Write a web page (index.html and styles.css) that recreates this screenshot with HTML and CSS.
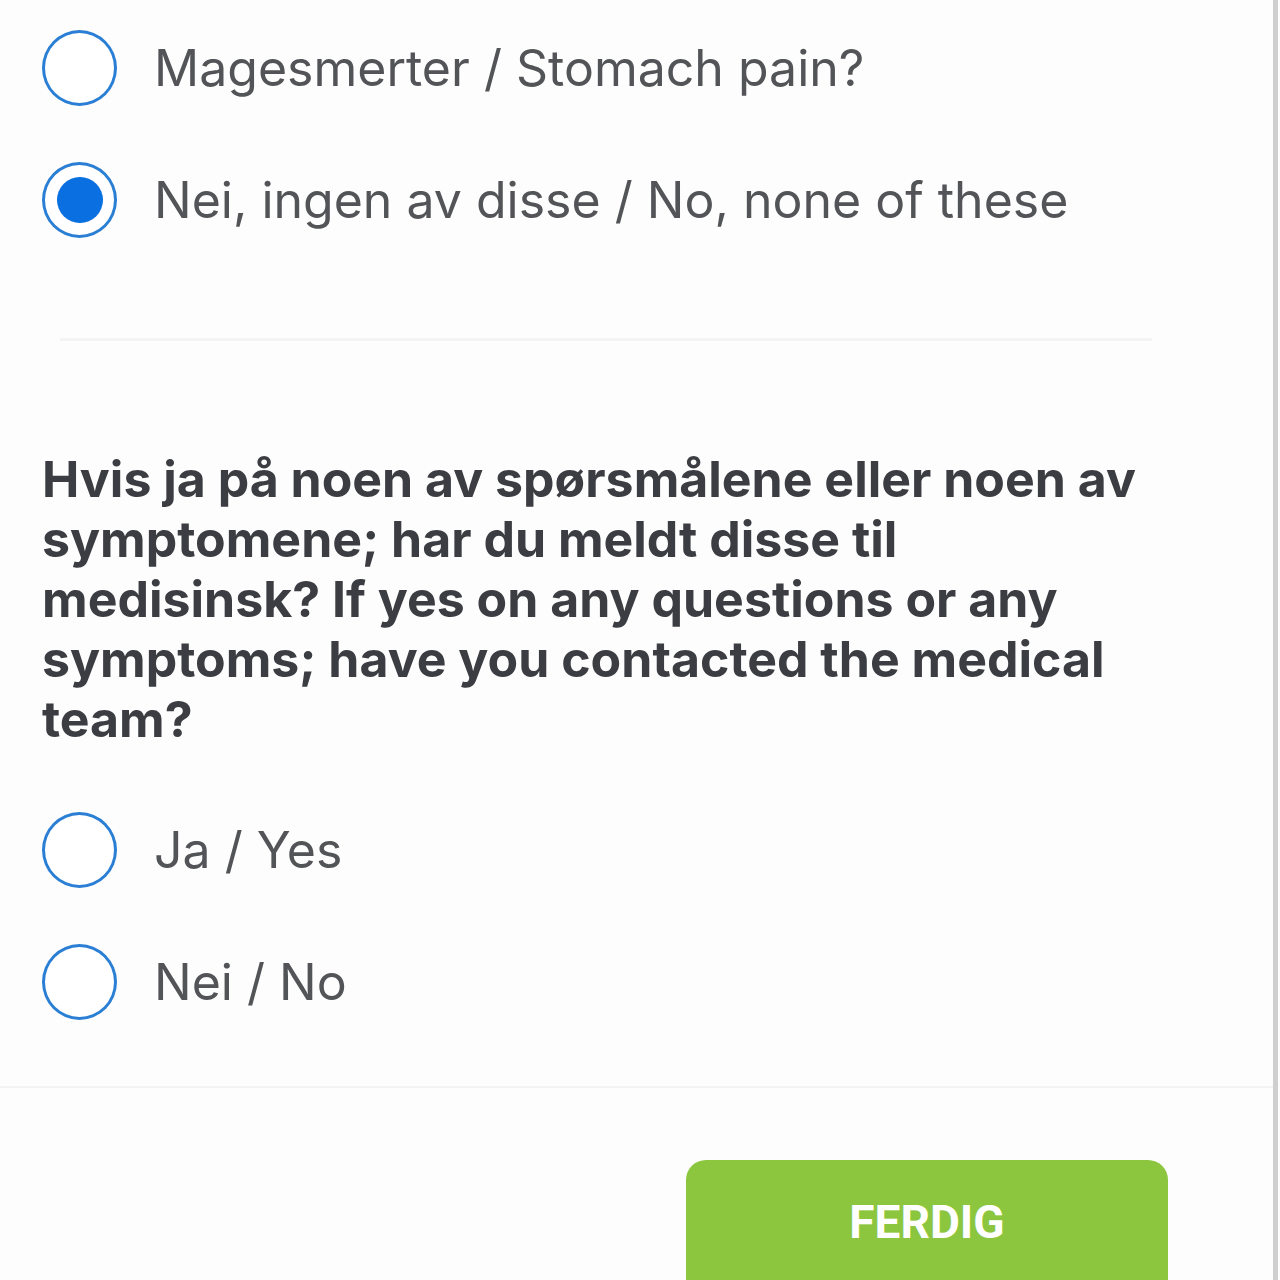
FILE: index.html
```html
<!DOCTYPE html>
<html lang="en">
<head>
    <meta charset="UTF-8">
    <title>Symptomer</title>
    <link rel="stylesheet" href="styles.css">
</head>
<body>
    <div class="page">
        <div class="form">
            <div class="options">
                <label class="option">
                    <span class="radio"></span>
                    <span class="option-text">Magesmerter / Stomach pain?</span>
                </label>
                <label class="option">
                    <span class="radio checked"></span>
                    <span class="option-text">Nei, ingen av disse / No, none of these</span>
                </label>
            </div>

            <hr class="divider">

            <h2 class="question">Hvis ja på noen av spørsmålene eller noen av symptomene; har du meldt disse til medisinsk? If yes on any questions or any symptoms; have you contacted the medical team?</h2>

            <div class="options">
                <label class="option">
                    <span class="radio"></span>
                    <span class="option-text">Ja / Yes</span>
                </label>
                <label class="option">
                    <span class="radio"></span>
                    <span class="option-text">Nei / No</span>
                </label>
            </div>
        </div>

        <div class="footer">
            <button class="done-button">FERDIG</button>
        </div>
    </div>
</body>
</html>
```

FILE: styles.css
```css
body {
    margin: 0;
    background-color: #fdfdfd;
    font-family: Inter, "Noto Sans", sans-serif;
    overflow: hidden;
}
.page {
    height: 1280px;
    border-right: 5px solid #cfcfcf;
    margin-right: 2px;
    box-sizing: border-box;
}
.form {
    padding: 0 0 0 42px;
    height: 1088px;
    box-sizing: border-box;
    border-bottom: 2px solid #f3f3f3;
}
.options {
    display: flex;
    flex-direction: column;
    gap: 56px;
    padding-top: 30px;
}
.option {
    display: flex;
    align-items: center;
    gap: 37px;
    height: 76px;
}
.radio {
    width: 75px;
    height: 76px;
    box-sizing: border-box;
    border: 3px solid #2a7fd4;
    border-radius: 50%;
    background-color: #fff;
    display: flex;
    align-items: center;
    justify-content: center;
    flex-shrink: 0;
}
.radio.checked::after {
    content: "";
    width: 46px;
    height: 46px;
    border-radius: 50%;
    background-color: #0a6fe0;
}
.option-text {
    font-size: 50px;
    color: #535457;
}
.divider {
    border: none;
    height: 3px;
    background-color: #f4f4f4;
    margin: 100px 0 0 18px;
    width: 1092px;
}
.question {
    font-size: 50px;
    font-weight: 700;
    line-height: 60px;
    color: #3b3d42;
    width: 1112px;
    margin: 108px 0 33px 0;
}
.footer {
    display: flex;
    justify-content: flex-end;
    padding: 72px 105px 0 0;
}
.done-button {
    width: 482px;
    height: 140px;
    background-color: #8cc63f;
    color: #fff;
    border: none;
    border-radius: 20px;
    font-family: Roboto, sans-serif;
    font-size: 46px;
    font-weight: 700;
    padding: 0 0 16px 0;
}
```
